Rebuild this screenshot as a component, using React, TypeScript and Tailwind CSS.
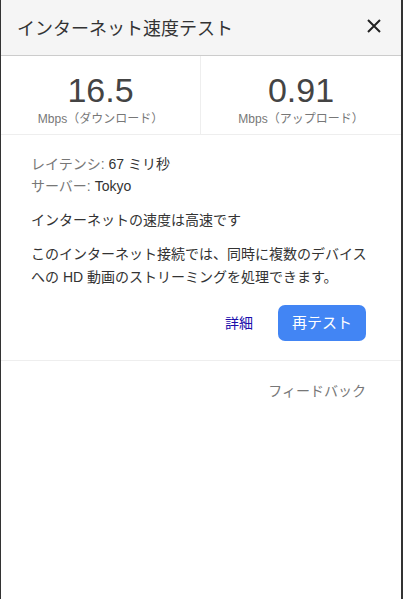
const font = "font-['Liberation_Sans','Noto_Sans_CJK_JP',sans-serif]";

function Speed({ value, label }: { value: string; label: string }) {
  return (
    <div className="flex flex-col items-center pt-[17px]">
      <div className="text-[34px] leading-[34px] text-[#444]">{value}</div>
      <div className="mt-[5px] text-[12px] leading-[14px] text-[#777]">{label}</div>
    </div>
  );
}

export default function App() {
  return (
    <div className={`${font} flex h-[599px] w-[403px] bg-[#333]`}>
      <div className="ml-px mr-[2px] flex flex-1 flex-col bg-white">
        <div className="flex h-[56px] items-center justify-between border-b border-[#ccc] bg-[#f5f5f5] pl-[16px] pr-[20px]">
          <span className="pt-[4px] text-[18px] text-[#333]">インターネット速度テスト</span>
          <svg width="14" height="14" viewBox="0 0 14 14" className="mt-[-4px]">
            <path d="M1 1 L13 13 M13 1 L1 13" stroke="#222" strokeWidth="2" />
          </svg>
        </div>
        <div className="grid h-[79px] grid-cols-2 border-b border-[#eee]">
          <div className="border-r border-[#eee]">
            <Speed value="16.5" label="Mbps（ダウンロード）" />
          </div>
          <Speed value="0.91" label="Mbps（アップロード）" />
        </div>
        <div className="px-[30px] pt-[18px] text-[14px] text-[#333]">
          <div className="leading-[22px]">
            <span className="text-[#777]">レイテンシ: </span>67 ミリ秒
          </div>
          <div className="leading-[22px]">
            <span className="text-[#777]">サーバー: </span>Tokyo
          </div>
          <div className="mt-[12px] leading-[22px]">インターネットの速度は高速です</div>
          <div className="mt-[12px] leading-[23px]">
            このインターネット接続では、同時に複数のデバイスへの HD 動画のストリーミングを処理できます。
          </div>
        </div>
        <div className="flex items-center justify-end gap-[25px] px-[35px] pt-[16px] pb-[19px]">
          <span className="text-[14px] text-[#1a0dab]">詳細</span>
          <button className="h-[36px] w-[88px] rounded-[7px] bg-[#4285f4] text-[15px] text-white">
            再テスト
          </button>
        </div>
        <div className="border-t border-[#eee] px-[35px] pt-[20px] text-right text-[14px] text-[#777]">
          フィードバック
        </div>
      </div>
    </div>
  );
}
